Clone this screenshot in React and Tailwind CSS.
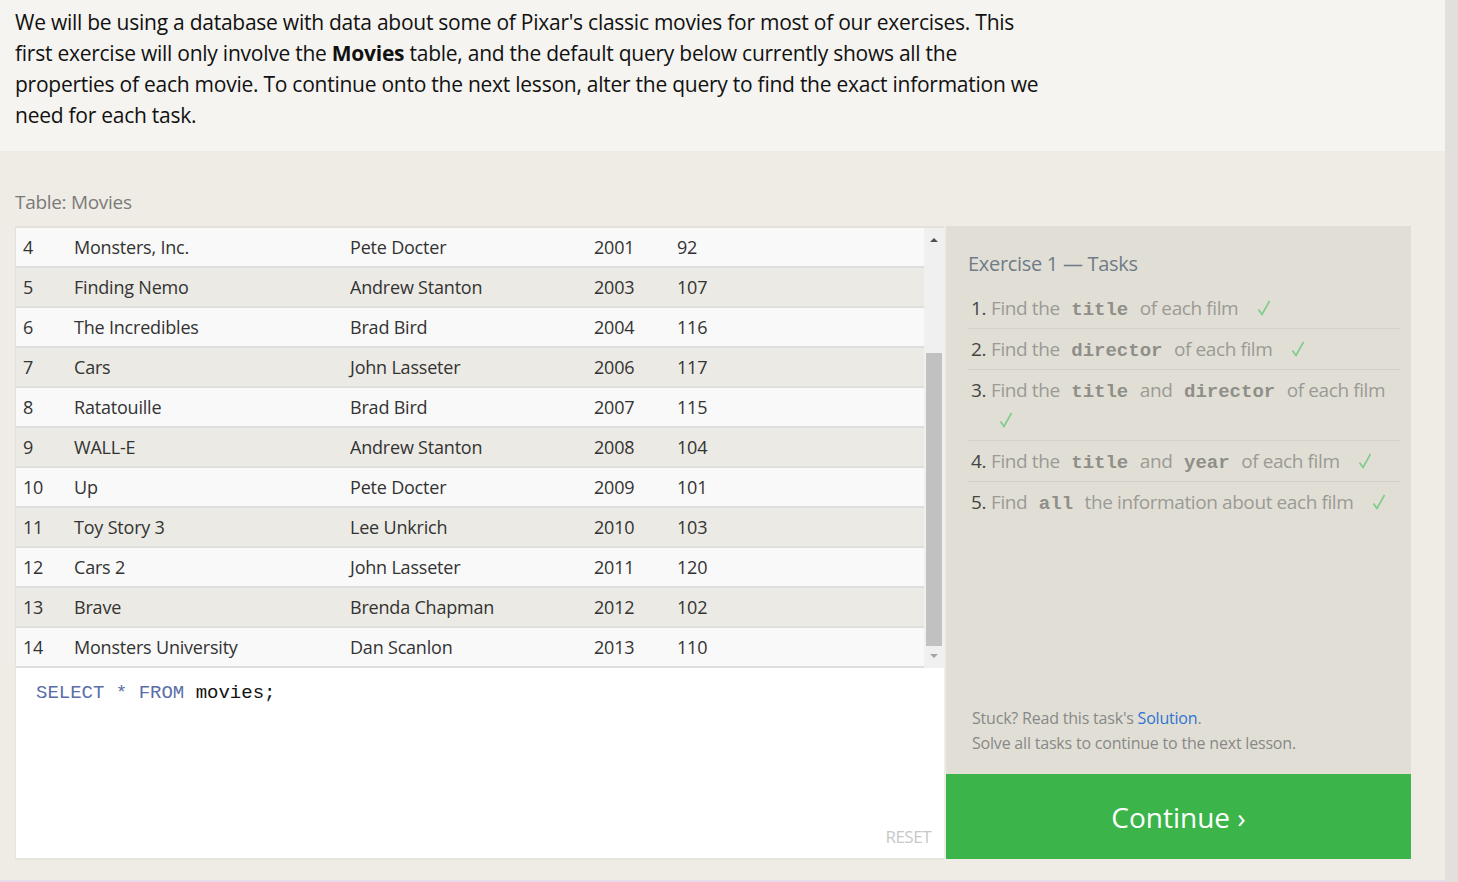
import React from "react";

const rows = [
  [4, "Monsters, Inc.", "Pete Docter", 2001, 92],
  [5, "Finding Nemo", "Andrew Stanton", 2003, 107],
  [6, "The Incredibles", "Brad Bird", 2004, 116],
  [7, "Cars", "John Lasseter", 2006, 117],
  [8, "Ratatouille", "Brad Bird", 2007, 115],
  [9, "WALL-E", "Andrew Stanton", 2008, 104],
  [10, "Up", "Pete Docter", 2009, 101],
  [11, "Toy Story 3", "Lee Unkrich", 2010, 103],
  [12, "Cars 2", "John Lasseter", 2011, 120],
  [13, "Brave", "Brenda Chapman", 2012, 102],
  [14, "Monsters University", "Dan Scanlon", 2013, 110],
];

const sans = "font-['Open_Sans','Noto_Sans',sans-serif]";
const mono = "font-['Liberation_Mono','DejaVu_Sans_Mono',monospace]";

function Code({ children }) {
  return (
    <span className={`${mono} font-bold text-[#8f8e89] mx-[7px] text-[19px] leading-none tracking-normal`}>
      {children}
    </span>
  );
}

function Check() {
  return (
    <svg width="14" height="16" viewBox="0 0 14 16" className="inline-block ml-[14px] align-[-1px]">
      <path d="M1.5 9.5 L5 14.5 L12.5 1" fill="none" stroke="#7fcb8b" strokeWidth="1.6" />
    </svg>
  );
}

function Task({ n, children, last }) {
  return (
    <li className={`flex ${last ? "" : "border-b border-[#d4d2c8]"} py-[5px]`}>
      <span className="w-[20px] shrink-0 text-[#444] ml-[3px]">{n}.</span>
      <span className="text-[#9b9a95]">{children}</span>
    </li>
  );
}

export default function App() {
  return (
    <div className={`flex w-[1458px] h-[882px] overflow-hidden ${sans}`}>
      <div className="flex flex-col w-[1445px]">
        <div className="bg-[#f5f4f0] h-[151px] px-[15px] pt-[7px]">
          <p className="text-[21px] leading-[31px] text-[#111] tracking-[-0.25px] whitespace-nowrap">
            We will be using a database with data about some of Pixar's classic movies for most of our exercises. This
            <br />
            first exercise will only involve the <b className="font-bold">Movies</b> table, and the default query below currently shows all the
            <br />
            properties of each movie. To continue onto the next lesson, alter the query to find the exact information we
            <br />
            need for each task.
          </p>
        </div>
        <div className="bg-[#efece5] flex-1 px-[15px] pt-[37px] border-b-2 border-[#e6dcea]">
          <div className="text-[19px] text-[#7a7a7a] leading-[28px] mb-[10px] tracking-[-0.3px]">Table: Movies</div>
          <div className="flex gap-[2px]">
            <div className="w-[929px] flex flex-col">
              <div className="flex border-t-2 border-l border-[#e2e1dc] bg-[#f0f0f0]">
                <div className="flex-1">
                  {rows.map((r, i) => (
                    <div
                      key={r[0]}
                      className={`flex items-center h-[40px] border-b-2 border-[#dedede] text-[18px] text-[#333] tracking-[-0.2px] ${
                        i % 2 === 0 ? "bg-[#f9f9f9]" : "bg-[#ebeae4]"
                      }`}
                    >
                      <span className="w-[58px] pl-[7px] pt-[1px]">{r[0]}</span>
                      <span className="w-[276px]">{r[1]}</span>
                      <span className="w-[244px]">{r[2]}</span>
                      <span className="w-[83px]">{r[3]}</span>
                      <span>{r[4]}</span>
                    </div>
                  ))}
                </div>
                <div className="w-[20px] bg-[#f0f0f0] flex flex-col items-center">
                  <svg width="10" height="20" viewBox="0 0 10 20" className="mt-[2px]">
                    <path d="M1 12 L5 8 L9 12 Z" fill="#505050" />
                  </svg>
                  <div className="w-[16px] h-[293px] bg-[#c1c1c1] mt-[103px]"></div>
                  <svg width="10" height="20" viewBox="0 0 10 20">
                    <path d="M1 8 L5 12 L9 8 Z" fill="#a3a3a3" />
                  </svg>
                </div>
              </div>
              <div className="relative bg-white h-[192px] border-l border-b-2 border-[#e5e5dc]">
                <div className={`${mono} text-[19px] pl-[20px] pt-[13px] leading-[24px]`}>
                  <span className="text-[#5a6ea8]">SELECT</span> <span className="text-[#5a6ea8]">*</span>{" "}
                  <span className="text-[#5a6ea8]">FROM</span> <span className="text-[#111]">movies;</span>
                </div>
                <div className="absolute right-[13px] bottom-[9px] text-[17px] text-[#c8c8c8] tracking-[-0.5px]">RESET</div>
              </div>
            </div>
            <div className="w-[465px] flex flex-col bg-[#e1dfd5] h-[633px]">
              <div className="flex-1 pl-[22px] pr-[11px] pt-[24px]">
                <div className="text-[20px] text-[#6f7b88] leading-[28px] mb-[10px] tracking-[-0.3px]">Exercise 1 — Tasks</div>
                <ol className="text-[19px] leading-[30px] tracking-[-0.4px]">
                  <Task n={1}>Find the <Code>title</Code> of each film <Check /></Task>
                  <Task n={2}>Find the <Code>director</Code> of each film <Check /></Task>
                  <Task n={3}>
                    Find the <Code>title</Code> and <Code>director</Code> of each film
                    <br />
                    <span className="ml-[-6px]"><Check /></span>
                  </Task>
                  <Task n={4}>Find the <Code>title</Code> and <Code>year</Code> of each film <Check /></Task>
                  <Task n={5} last>Find <Code>all</Code> the information about each film <Check /></Task>
                </ol>
              </div>
              <div className="px-[26px] pb-[18px] text-[16px] leading-[25px] text-[#888] tracking-[-0.2px]">
                <div>
                  Stuck? Read this task's <span className="text-[#2f74d0]">Solution</span>.
                </div>
                <div>Solve all tasks to continue to the next lesson.</div>
              </div>
              <div className="h-[85px] bg-[#3bb54a] flex items-center justify-center text-white text-[28px]">
                Continue ›
              </div>
            </div>
          </div>
        </div>
      </div>
      <div className="w-[13px] bg-[#e2dfdc]"></div>
    </div>
  );
}
